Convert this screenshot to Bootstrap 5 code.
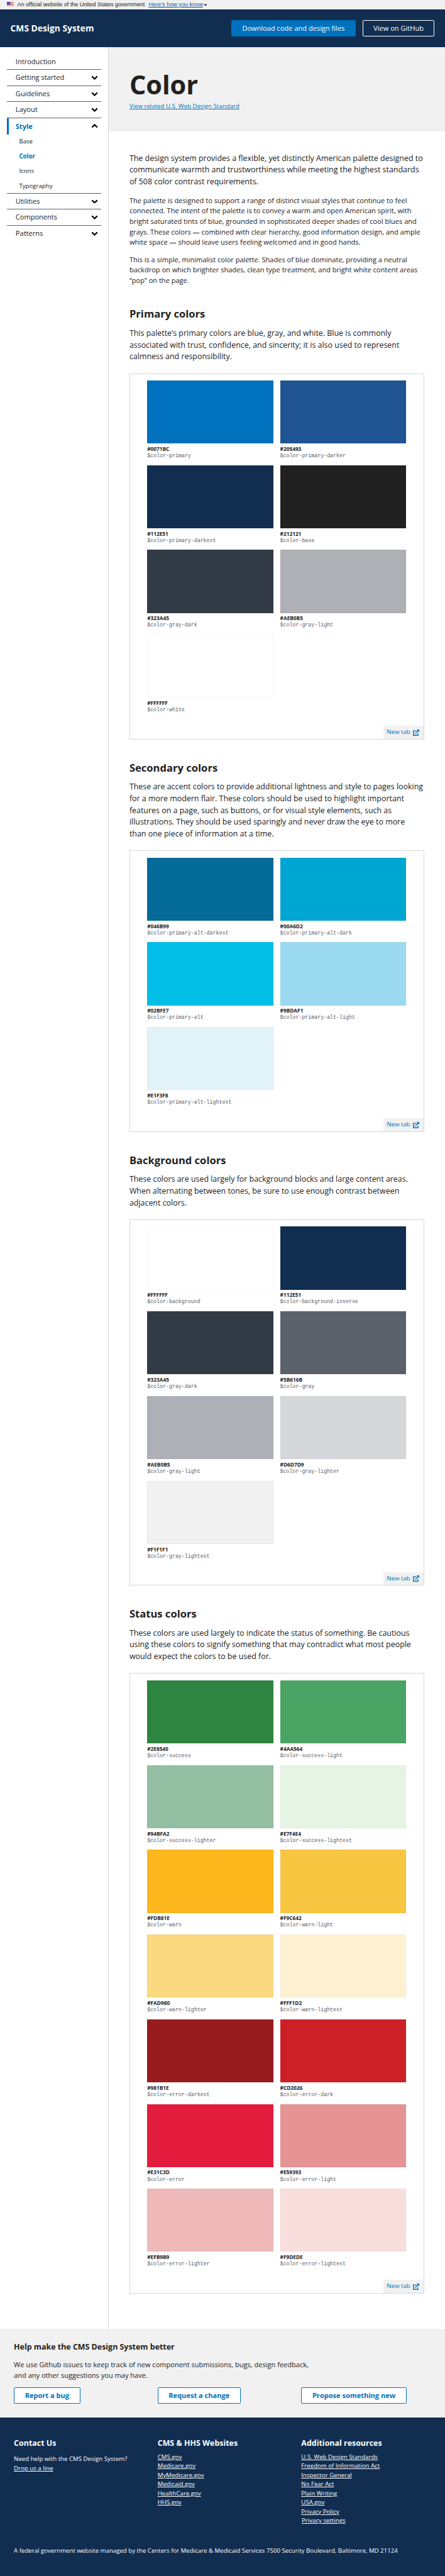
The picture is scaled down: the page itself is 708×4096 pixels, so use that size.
<!DOCTYPE html>
<html lang="en">
<head>
<meta charset="utf-8">
<meta name="viewport" content="width=device-width, initial-scale=1">
<title>Color - CMS Design System</title>
<link href="https://cdn.jsdelivr.net/npm/bootstrap@5.3.0/dist/css/bootstrap.min.css" rel="stylesheet">
<style>
:root{--u:.69096px}
html{font-size:calc(16*var(--u))}
body{font-family:"Open Sans",sans-serif;font-size:calc(16*var(--u));line-height:1.5;color:#212121;background:#fff;margin:0}
a{color:#0071bc}
p{margin:0}
.gov-banner{height:calc(22*var(--u));background:#f0f0f0;padding:0 calc(16*var(--u));font:calc(13*var(--u))/1 "Liberation Sans",sans-serif;color:#1b1b1b;white-space:nowrap}
.gov-banner a{color:#005ea2;margin-left:calc(9*var(--u));letter-spacing:calc(.08*var(--u));text-underline-offset:calc(2*var(--u))}
.gov-flag{width:calc(16*var(--u));height:calc(11*var(--u));margin-right:calc(8*var(--u));margin-top:calc(-3*var(--u))}
.gov-caret{width:calc(8*var(--u));height:calc(5*var(--u));margin-left:calc(2.5*var(--u))}
.site-head{height:calc(86*var(--u));background:#112e51;padding:0 calc(24*var(--u))}
.brand-name{font-size:calc(20*var(--u));font-weight:700;color:#fff}
.ds-btn{display:inline-flex;align-items:center;justify-content:center;height:calc(38*var(--u));padding:0 calc(24*var(--u));border:1px solid #0071bc;border-radius:calc(3*var(--u));font-size:calc(16*var(--u));text-decoration:none;white-space:nowrap}
.ds-primary{background:#0071bc;color:#fff;width:calc(286*var(--u))}
.ds-inverse{border-color:#fff;color:#fff;width:calc(166*var(--u))}
.ds-outline{background:#fff;color:#0071bc;font-weight:700}
.side-col{width:calc(250*var(--u));flex:none;border-right:1px solid #d6d7d9;padding:calc(16*var(--u)) calc(16*var(--u)) 0}
.side-item{height:calc(37.07*var(--u));padding:0 calc(7*var(--u)) 0 calc(20*var(--u));border-bottom:1px solid #5b616b;color:#212121;text-decoration:none}
.side-item svg{width:calc(16*var(--u));height:calc(10*var(--u))}
.side-item.on{border-bottom:0;border-left:calc(4.5*var(--u)) solid #0071bc;padding-left:calc(15.5*var(--u));color:#0071bc;font-weight:700}
.side-sub{border-bottom:1px solid #5b616b;height:calc(136*var(--u));font-size:calc(14*var(--u))}
.side-sub a{height:calc(34*var(--u));padding-left:calc(28*var(--u));color:#212121;text-decoration:none}
.side-sub a.on{color:#0071bc;font-weight:700}
.hero{height:calc(195*var(--u));background:#f1f1f1;padding:calc(48*var(--u)) 0 0 calc(48*var(--u))}
.hero h1{font-size:calc(60*var(--u));font-weight:700;line-height:1.3;margin:0 0 calc(.5*var(--u))}
.hero a{display:block;font-size:calc(14*var(--u));line-height:calc(21*var(--u))}
.doc{padding:calc(48*var(--u)) calc(48*var(--u)) calc(80.3*var(--u))}
.intro{font-size:calc(18*var(--u));line-height:calc(27*var(--u));white-space:nowrap}
.opening{margin-bottom:calc(18*var(--u))}
.copy{line-height:calc(24*var(--u));margin-bottom:calc(16*var(--u));white-space:nowrap}
.doc h2{font-size:calc(24*var(--u));line-height:1.3;font-weight:700;margin:calc(48.8*var(--u)) 0 calc(16*var(--u))}
.panel{width:calc(678.5*var(--u));border:1px solid #d6d7d9;margin-top:calc(24.2*var(--u));padding:calc(15.1*var(--u)) 0 0 calc(39.5*var(--u))}
.tiles{display:grid;grid-template-columns:repeat(2,calc(290.2*var(--u)));column-gap:calc(15.8*var(--u));grid-auto-rows:calc(195*var(--u))}
.chip{height:calc(145*var(--u));background:var(--c);border:1px solid rgba(0,0,0,.03);margin-bottom:calc(4*var(--u))}
.hex{font-size:calc(12*var(--u));line-height:calc(16*var(--u));font-weight:700}
.token{font:calc(12*var(--u))/calc(17.6*var(--u)) "Liberation Mono",monospace;color:#5b616b}
.newtab{width:calc(92.5*var(--u));height:calc(30*var(--u));margin:calc(15*var(--u)) 0 0 auto;background:#f1f1f1;font-size:calc(14*var(--u));padding:0 calc(9*var(--u)) 0 calc(8*var(--u));text-decoration:none;white-space:nowrap}
.newtab svg{width:calc(14.5*var(--u));height:calc(14.5*var(--u))}
.help{background:#f1f1f1;height:calc(205.4*var(--u));padding:calc(31.7*var(--u)) 0 0 calc(32*var(--u))}
.help h3,.foot h3{font-size:calc(18*var(--u));font-weight:700;line-height:calc(23.4*var(--u));margin:0}
.help p{line-height:calc(24*var(--u));margin:calc(16.6*var(--u)) 0 calc(15.9*var(--u));white-space:nowrap}
.foot{background:#112e51;color:#fff;height:calc(366*var(--u));padding:calc(47.5*var(--u)) 0 0 calc(32*var(--u));font-size:calc(14*var(--u));line-height:calc(21*var(--u))}
.foot a{color:#fff}
.foot-cols{height:calc(248.5*var(--u))}
.links{margin-top:calc(9*var(--u))}
.contact{margin-top:calc(14*var(--u))}
.privacy{margin-left:calc(1*var(--u))}
</style>
</head>
<body>
<svg width="0" height="0" class="position-absolute">
  <symbol id="down" viewBox="0 0 16 10"><path d="M2 2l6 6 6-6" fill="none" stroke="#000" stroke-width="3.2"/></symbol>
  <symbol id="up" viewBox="0 0 16 10"><path d="M2 8l6-6 6 6" fill="none" stroke="#000" stroke-width="3.2"/></symbol>
  <symbol id="ext" viewBox="0 0 14 14"><path d="M7.500 3H1v10h10V8M5 9l6.500-6.500" fill="none" stroke="#0071bc" stroke-width="2"/><path d="M8 0h6v6z" fill="#0071bc"/></symbol>
</svg>

<div class="gov-banner d-flex align-items-center">
  <svg class="gov-flag" viewBox="0 0 16 11"><path fill="#fff" d="M0 0h16v11H0z"/><path d="M0 .5h16M0 2.5h16M0 4.5h16M0 6.5h16M0 8.5h16M0 10.5h16" stroke="#db3e1f"/><path fill="#1e33b1" d="M0 0h8v6.5H0z"/><path d="M1 1.5h7M2 3h6M1 4.500h7" stroke="#fff" stroke-width=".7" stroke-dasharray=".8 1.200"/></svg>
  <span class="gov-text">An official website of the United States government</span>
  <a href="#" class="gov-link">Here’s how you know</a>
  <svg class="gov-caret" viewBox="0 0 16 10"><use href="#down"/></svg>
</div>

<header class="site-head d-flex align-items-center">
  <div class="brand-name me-auto">CMS Design System</div>
  <div class="d-flex gap-3">
    <a class="ds-btn ds-primary" href="#">Download code and design files</a>
    <a class="ds-btn ds-inverse" href="#">View on GitHub</a>
  </div>
</header>

<div class="d-flex">
  <nav class="side-col">
    <a class="side-item d-flex align-items-center justify-content-between" href="#">Introduction</a>
    <a class="side-item d-flex align-items-center justify-content-between" href="#">Getting started<svg><use href="#down"/></svg></a>
    <a class="side-item d-flex align-items-center justify-content-between" href="#">Guidelines<svg><use href="#down"/></svg></a>
    <a class="side-item d-flex align-items-center justify-content-between" href="#">Layout<svg><use href="#down"/></svg></a>
    <a class="side-item on d-flex align-items-center justify-content-between" href="#">Style<svg><use href="#up"/></svg></a>
    <div class="side-sub">
      <a class="d-flex align-items-center" href="#">Base</a>
      <a class="on d-flex align-items-center" href="#">Color</a>
      <a class="d-flex align-items-center" href="#">Icons</a>
      <a class="d-flex align-items-center" href="#">Typography</a>
    </div>
    <a class="side-item d-flex align-items-center justify-content-between" href="#">Utilities<svg><use href="#down"/></svg></a>
    <a class="side-item d-flex align-items-center justify-content-between" href="#">Components<svg><use href="#down"/></svg></a>
    <a class="side-item border-0 d-flex align-items-center justify-content-between" href="#">Patterns<svg><use href="#down"/></svg></a>
  </nav>

  <main class="flex-grow-1">
    <div class="hero">
      <h1>Color</h1>
      <a href="#">View related U.S. Web Design Standard</a>
    </div>
    <div class="doc">
      <p class="intro opening">The design system provides a flexible, yet distinctly American palette designed to<br>communicate warmth and trustworthiness while meeting the highest standards<br>of 508 color contrast requirements.</p>
      <p class="copy">The palette is designed to support a range of distinct visual styles that continue to feel<br>connected. The intent of the palette is to convey a warm and open American spirit, with<br>bright saturated tints of blue, grounded in sophisticated deeper shades of cool blues and<br>grays. These colors — combined with clear hierarchy, good information design, and ample<br>white space — should leave users feeling welcomed and in good hands.</p>
      <p class="copy">This is a simple, minimalist color palette. Shades of blue dominate, providing a neutral<br>backdrop on which brighter shades, clean type treatment, and bright white content areas<br>“pop” on the page.</p>

      <h2>Primary colors</h2>
      <p class="intro">This palette’s primary colors are blue, gray, and white. Blue is commonly<br>associated with trust, confidence, and sincerity; it is also used to represent<br>calmness and responsibility.</p>
      <div class="panel">
        <div class="tiles">
          <div><div class="chip" style="--c:#0071bc"></div><div class="hex">#0071BC</div><div class="token">$color-primary</div></div>
          <div><div class="chip" style="--c:#205493"></div><div class="hex">#205493</div><div class="token">$color-primary-darker</div></div>
          <div><div class="chip" style="--c:#112e51"></div><div class="hex">#112E51</div><div class="token">$color-primary-darkest</div></div>
          <div><div class="chip" style="--c:#212121"></div><div class="hex">#212121</div><div class="token">$color-base</div></div>
          <div><div class="chip" style="--c:#323a45"></div><div class="hex">#323A45</div><div class="token">$color-gray-dark</div></div>
          <div><div class="chip" style="--c:#aeb0b5"></div><div class="hex">#AEB0B5</div><div class="token">$color-gray-light</div></div>
          <div><div class="chip" style="--c:#ffffff"></div><div class="hex">#FFFFFF</div><div class="token">$color-white</div></div>
        </div>
        <a class="newtab d-flex align-items-center justify-content-between" href="#">New tab<svg><use href="#ext"/></svg></a>
      </div>

      <h2>Secondary colors</h2>
      <p class="intro">These are accent colors to provide additional lightness and style to pages looking<br>for a more modern flair. These colors should be used to highlight important<br>features on a page, such as buttons, or for visual style elements, such as<br>illustrations. They should be used sparingly and never draw the eye to more<br>than one piece of information at a time.</p>
      <div class="panel">
        <div class="tiles">
          <div><div class="chip" style="--c:#046b99"></div><div class="hex">#046B99</div><div class="token">$color-primary-alt-darkest</div></div>
          <div><div class="chip" style="--c:#00a6d2"></div><div class="hex">#00A6D2</div><div class="token">$color-primary-alt-dark</div></div>
          <div><div class="chip" style="--c:#02bfe7"></div><div class="hex">#02BFE7</div><div class="token">$color-primary-alt</div></div>
          <div><div class="chip" style="--c:#9bdaf1"></div><div class="hex">#9BDAF1</div><div class="token">$color-primary-alt-light</div></div>
          <div><div class="chip" style="--c:#e1f3f8"></div><div class="hex">#E1F3F8</div><div class="token">$color-primary-alt-lightest</div></div>
        </div>
        <a class="newtab d-flex align-items-center justify-content-between" href="#">New tab<svg><use href="#ext"/></svg></a>
      </div>

      <h2>Background colors</h2>
      <p class="intro">These colors are used largely for background blocks and large content areas.<br>When alternating between tones, be sure to use enough contrast between<br>adjacent colors.</p>
      <div class="panel">
        <div class="tiles">
          <div><div class="chip" style="--c:#ffffff"></div><div class="hex">#FFFFFF</div><div class="token">$color-background</div></div>
          <div><div class="chip" style="--c:#112e51"></div><div class="hex">#112E51</div><div class="token">$color-background-inverse</div></div>
          <div><div class="chip" style="--c:#323a45"></div><div class="hex">#323A45</div><div class="token">$color-gray-dark</div></div>
          <div><div class="chip" style="--c:#5b616b"></div><div class="hex">#5B616B</div><div class="token">$color-gray</div></div>
          <div><div class="chip" style="--c:#aeb0b5"></div><div class="hex">#AEB0B5</div><div class="token">$color-gray-light</div></div>
          <div><div class="chip" style="--c:#d6d7d9"></div><div class="hex">#D6D7D9</div><div class="token">$color-gray-lighter</div></div>
          <div><div class="chip" style="--c:#f1f1f1"></div><div class="hex">#F1F1F1</div><div class="token">$color-gray-lightest</div></div>
        </div>
        <a class="newtab d-flex align-items-center justify-content-between" href="#">New tab<svg><use href="#ext"/></svg></a>
      </div>

      <h2>Status colors</h2>
      <p class="intro">These colors are used largely to indicate the status of something. Be cautious<br>using these colors to signify something that may contradict what most people<br>would expect the colors to be used for.</p>
      <div class="panel">
        <div class="tiles">
          <div><div class="chip" style="--c:#2e8540"></div><div class="hex">#2E8540</div><div class="token">$color-success</div></div>
          <div><div class="chip" style="--c:#4aa564"></div><div class="hex">#4AA564</div><div class="token">$color-success-light</div></div>
          <div><div class="chip" style="--c:#94bfa2"></div><div class="hex">#94BFA2</div><div class="token">$color-success-lighter</div></div>
          <div><div class="chip" style="--c:#e7f4e4"></div><div class="hex">#E7F4E4</div><div class="token">$color-success-lightest</div></div>
          <div><div class="chip" style="--c:#fdb81e"></div><div class="hex">#FDB81E</div><div class="token">$color-warn</div></div>
          <div><div class="chip" style="--c:#f9c642"></div><div class="hex">#F9C642</div><div class="token">$color-warn-light</div></div>
          <div><div class="chip" style="--c:#fad980"></div><div class="hex">#FAD980</div><div class="token">$color-warn-lighter</div></div>
          <div><div class="chip" style="--c:#fff1d2"></div><div class="hex">#FFF1D2</div><div class="token">$color-warn-lightest</div></div>
          <div><div class="chip" style="--c:#981b1e"></div><div class="hex">#981B1E</div><div class="token">$color-error-darkest</div></div>
          <div><div class="chip" style="--c:#cd2026"></div><div class="hex">#CD2026</div><div class="token">$color-error-dark</div></div>
          <div><div class="chip" style="--c:#e31c3d"></div><div class="hex">#E31C3D</div><div class="token">$color-error</div></div>
          <div><div class="chip" style="--c:#e59393"></div><div class="hex">#E59393</div><div class="token">$color-error-light</div></div>
          <div><div class="chip" style="--c:#efb9b9"></div><div class="hex">#EFB9B9</div><div class="token">$color-error-lighter</div></div>
          <div><div class="chip" style="--c:#f9dede"></div><div class="hex">#F9DEDE</div><div class="token">$color-error-lightest</div></div>
        </div>
        <a class="newtab d-flex align-items-center justify-content-between" href="#">New tab<svg><use href="#ext"/></svg></a>
      </div>
    </div>
  </main>
</div>

<section class="help">
  <h3>Help make the CMS Design System better</h3>
  <p>We use Github issues to keep track of new component submissions, bugs, design feedback,<br>and any other suggestions you may have.</p>
  <div class="row g-0">
    <div class="col-4 d-flex"><a class="ds-btn ds-outline" href="#">Report a bug</a></div>
    <div class="col-4 d-flex"><a class="ds-btn ds-outline" href="#">Request a change</a></div>
    <div class="col-4 d-flex"><a class="ds-btn ds-outline" href="#">Propose something new</a></div>
  </div>
</section>

<footer class="foot">
  <div class="row g-0 foot-cols">
    <div class="col-4"><h3>Contact Us</h3><div class="contact">Need help with the CMS Design System?<br><a href="#">Drop us a line</a></div></div>
    <div class="col-4"><h3>CMS &amp; HHS Websites</h3><div class="links"><a href="#">CMS.gov</a><br><a href="#">Medicare.gov</a><br><a href="#">MyMedicare.gov</a><br><a href="#">Medicaid.gov</a><br><a href="#">HealthCare.gov</a><br><a href="#">HHS.gov</a></div></div>
    <div class="col-4"><h3>Additional resources</h3><div class="links"><a href="#">U.S. Web Design Standards</a><br><a href="#">Freedom of Information Act</a><br><a href="#">Inspector General</a><br><a href="#">No Fear Act</a><br><a href="#">Plain Writing</a><br><a href="#">USA.gov</a><br><a href="#">Privacy Policy</a><br><a href="#" class="privacy">Privacy settings</a></div></div>
  </div>
  <p>A federal government website managed by the Centers for Medicare &amp; Medicaid Services 7500 Security Boulevard, Baltimore, MD 21124</p>
</footer>
<script src="https://cdn.jsdelivr.net/npm/bootstrap@5.3.0/dist/js/bootstrap.bundle.min.js"></script>
</body>
</html>
